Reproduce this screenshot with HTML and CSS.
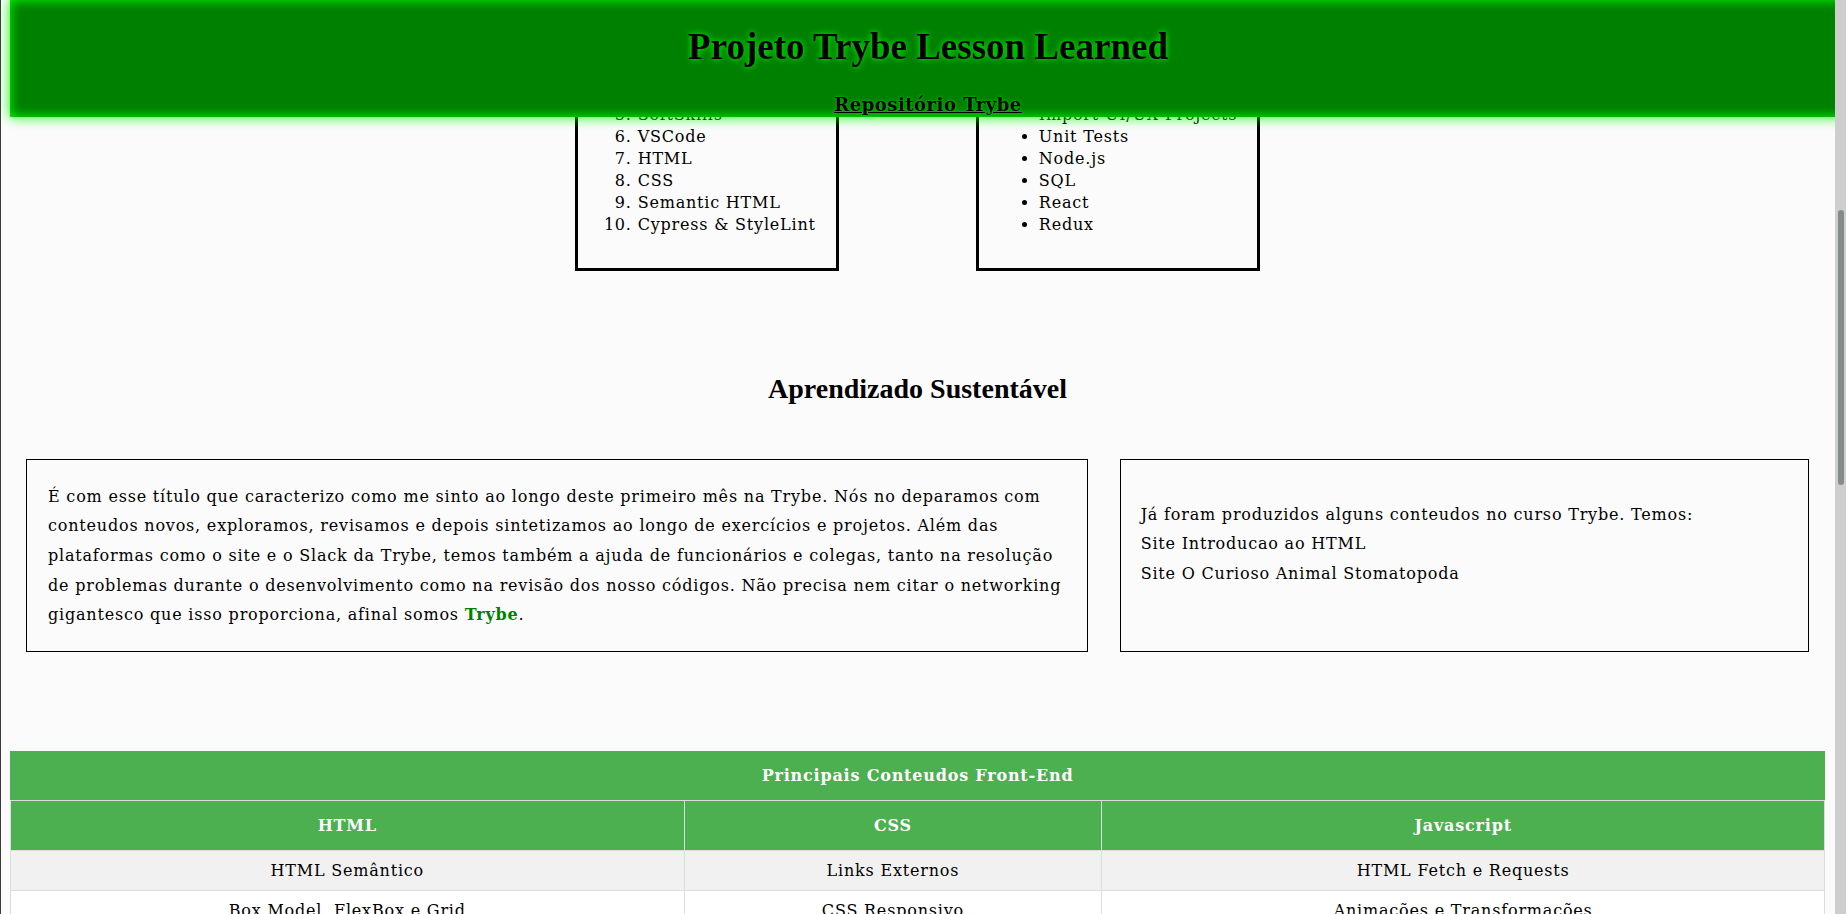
FILE: index.html
```html
<!DOCTYPE html>
<html lang="pt-BR">
<head>
  <meta charset="utf-8">
  <title>Projeto Trybe Lesson Learned</title>
  <link rel="stylesheet" href="styles.css">
</head>
<body>
  <header class="site-header">
    <h1 class="site-title">Projeto Trybe Lesson Learned</h1>
    <h3 class="repo"><a class="repo-link" href="#">Repositório Trybe</a></h3>
  </header>

  <div class="scrollbar" aria-hidden="true"><div class="scrollbar-thumb"></div></div>

  <main class="page">
    <section class="intro">
      <h2 class="section-title">Sobre o Projeto</h2>
      <p class="intro-text">Este projeto reúne os principais aprendizados do primeiro mês de curso na Trybe, com os conteúdos estudados, as reflexões sobre o processo de aprendizagem e os projetos desenvolvidos ao longo do caminho.</p>
      <p class="intro-text">Aqui estão listadas as ferramentas e tecnologias que já vimos e as que ainda vamos estudar nos próximos módulos.</p>
    </section>

    <section class="topics-section">
      <h2 class="section-title">Conteúdos</h2>
      <div class="topics-row">
        <div class="topics">
          <ol class="topic-list">
            <li>Unix</li>
            <li>Bash</li>
            <li>Git</li>
            <li>GitHub</li>
            <li>SoftSkills</li>
            <li>VSCode</li>
            <li>HTML</li>
            <li>CSS</li>
            <li>Semantic HTML</li>
            <li>Cypress &amp; StyleLint</li>
          </ol>
        </div>
        <div class="topics">
          <ul class="topic-list">
            <li>JavaScript</li>
            <li>DOM</li>
            <li>Eventos</li>
            <li>Jest</li>
            <li>Import UI/UX Projects</li>
            <li>Unit Tests</li>
            <li>Node.js</li>
            <li>SQL</li>
            <li>React</li>
            <li>Redux</li>
          </ul>
        </div>
      </div>
    </section>

    <section class="learning">
      <h2 class="learning-title">Aprendizado Sustentável</h2>
      <div class="learning-cards">
        <article class="card card-main">
          <p>É com esse título que caracterizo como me sinto ao longo deste primeiro mês na Trybe. Nós no deparamos com conteudos novos, exploramos, revisamos e depois sintetizamos ao longo de exercícios e projetos. Além das plataformas como o site e o Slack da Trybe, temos também a ajuda de funcionários e colegas, tanto na resolução de problemas durante o desenvolvimento como na revisão dos nosso códigos. Não precisa nem citar o networking gigantesco que isso proporciona, afinal somos <strong class="brand">Trybe</strong>.</p>
        </article>
        <article class="card card-side">
          <p>Já foram produzidos alguns conteudos no curso Trybe. Temos:<br>
            <a class="site-link" href="#">Site Introducao ao HTML</a><br>
            <a class="site-link" href="#">Site O Curioso Animal Stomatopoda</a>
          </p>
        </article>
      </div>
    </section>

    <section class="contents">
      <table class="contents-table">
        <caption class="contents-caption">Principais Conteudos Front-End</caption>
        <colgroup>
          <col class="col-html">
          <col class="col-css">
          <col class="col-js">
        </colgroup>
        <thead>
          <tr>
            <th>HTML</th>
            <th>CSS</th>
            <th>Javascript</th>
          </tr>
        </thead>
        <tbody>
          <tr>
            <td>HTML Semântico</td>
            <td>Links Externos</td>
            <td>HTML Fetch e Requests</td>
          </tr>
          <tr>
            <td>Box Model, FlexBox e Grid</td>
            <td>CSS Responsivo</td>
            <td>Animações e Transformações</td>
          </tr>
          <tr>
            <td>Formulários</td>
            <td>Seletores e Especificidade</td>
            <td>Manipulação do DOM</td>
          </tr>
          <tr>
            <td>Tabelas</td>
            <td>Pseudo-classes</td>
            <td>Eventos</td>
          </tr>
          <tr>
            <td>Acessibilidade</td>
            <td>Media Queries</td>
            <td>ES6</td>
          </tr>
          <tr>
            <td>SEO</td>
            <td>Bootstrap</td>
            <td>Promises e Async/Await</td>
          </tr>
        </tbody>
      </table>
    </section>

    <section class="contents">
      <table class="contents-table">
        <caption class="contents-caption">Principais Conteudos Back-End</caption>
        <colgroup>
          <col class="col-html">
          <col class="col-css">
          <col class="col-js">
        </colgroup>
        <thead>
          <tr>
            <th>Node.js</th>
            <th>SQL</th>
            <th>Testes</th>
          </tr>
        </thead>
        <tbody>
          <tr>
            <td>Express</td>
            <td>Consultas</td>
            <td>Mocha e Chai</td>
          </tr>
          <tr>
            <td>Middlewares</td>
            <td>Joins</td>
            <td>Sinon</td>
          </tr>
          <tr>
            <td>APIs REST</td>
            <td>Normalização</td>
            <td>Testes de Integração</td>
          </tr>
        </tbody>
      </table>
    </section>

    <footer class="site-footer">
      <p>Projeto desenvolvido durante o curso de Desenvolvimento Web da Trybe.</p>
    </footer>
  </main>

  <script src="script.js"></script>
</body>
</html>
```

FILE: styles.css
```css
html {
  padding-right: 11px;
  box-shadow: inset 1px 0 0 #3a3a3a;
}

body {
  margin: 8px;
  padding-top: 130px;
  background: #fcfbfc;
  color: #000;
  font-family: "DejaVu Serif", serif;
  font-size: 16px;
  letter-spacing: 0.8px;
}

/* Header */
.site-header {
  position: fixed;
  top: 0;
  left: 10px;
  right: 0;
  z-index: 10;
  height: 117px;
  box-sizing: border-box;
  padding-top: 27px;
  display: flex;
  flex-direction: column;
  align-items: center;
  background: #008000;
  box-shadow: inset 0 0 12px #00ff00, 0 0 12px #00ff00;
}

.site-title {
  margin: 0 0 28px;
  font-family: "Liberation Serif", serif;
  font-size: 37px;
  font-weight: bold;
  line-height: 40px;
  letter-spacing: normal;
  text-shadow: 0 0 6px #00ff00;
}

.repo {
  margin: 0;
  font-size: 18px;
  line-height: 19px;
  letter-spacing: 0.5px;
}

.repo-link {
  color: #000;
  text-decoration: underline;
  text-shadow: 0 0 3px #00e000;
}

/* Browser scrollbar */
.scrollbar {
  position: fixed;
  top: 0;
  right: 0;
  bottom: 0;
  z-index: 20;
  width: 11px;
  background: #cecece;
}

.scrollbar-thumb {
  width: 6px;
  height: 275px;
  margin: 210px 0 0 3px;
  border-radius: 3px;
  background: #858a8a;
}

/* Intro (above the fold) */
.intro {
  padding: 40px 18px 80px;
}

.section-title {
  margin: 0 0 40px;
  text-align: center;
  font-family: "Liberation Serif", serif;
  font-size: 28px;
  line-height: 34px;
  letter-spacing: normal;
}

.intro-text {
  margin: 0 0 16px;
  line-height: 1.85;
}

/* Topic lists */
.topics-row {
  display: flex;
  justify-content: center;
  gap: 137px;
}

.topics {
  border: 3px solid #000;
  padding: 16px 20px;
}

.topic-list {
  margin: 16px 0;
  padding-left: 40px;
  line-height: 22px;
}

/* Sustainable learning */
.learning {
  padding-top: 101px;
}

.learning-title {
  margin: 0 0 53px;
  text-align: center;
  font-family: "Liberation Serif", serif;
  font-size: 28px;
  font-weight: bold;
  line-height: 34px;
  letter-spacing: normal;
}

.learning-cards {
  display: grid;
  grid-template-columns: 1.54fr 1fr;
  gap: 32px;
  padding: 0 18px;
}

.card {
  border: 1px solid #000;
  line-height: 1.85;
}

.card p {
  margin: 0;
}

.card-main {
  padding: 22px 21px 21px;
}

.card-side {
  padding: 20px;
}

.card-side p {
  margin: 20px 0;
}

.brand {
  color: #008000;
}

.site-link {
  color: #000;
  text-decoration: none;
}

/* Tables */
.contents {
  margin-top: 99px;
}

.contents-table {
  width: calc(100% - 4px);
  margin: 0 2px;
  border-collapse: collapse;
  table-layout: fixed;
}

.contents-caption {
  padding: 15px;
  background: #4caf50;
  color: #fff;
  font-weight: bold;
}

.col-html {
  width: 37.13%;
}

.col-css {
  width: 23.03%;
}

.col-js {
  width: 39.84%;
}

.contents-table th {
  padding: 15px;
  border: 1px solid #ddd;
  background: #4caf50;
  color: #fff;
  font-weight: bold;
}

.contents-table td {
  padding: 10px;
  border: 1px solid #ddd;
  text-align: center;
  background: #fff;
}

.contents-table tbody tr:nth-child(odd) td {
  background: #f1f1f1;
}

.site-footer {
  margin-top: 120px;
  padding: 40px 18px 260px;
  text-align: center;
}
```

FILE: script.js
```js
(function () {
  function align() {
    var box = document.querySelector('.topics');
    if (!box) return;
    var r = box.getBoundingClientRect();
    window.scrollTo(0, window.scrollY + r.bottom - 271);
  }
  align();
  window.addEventListener('load', align);
})();
```
